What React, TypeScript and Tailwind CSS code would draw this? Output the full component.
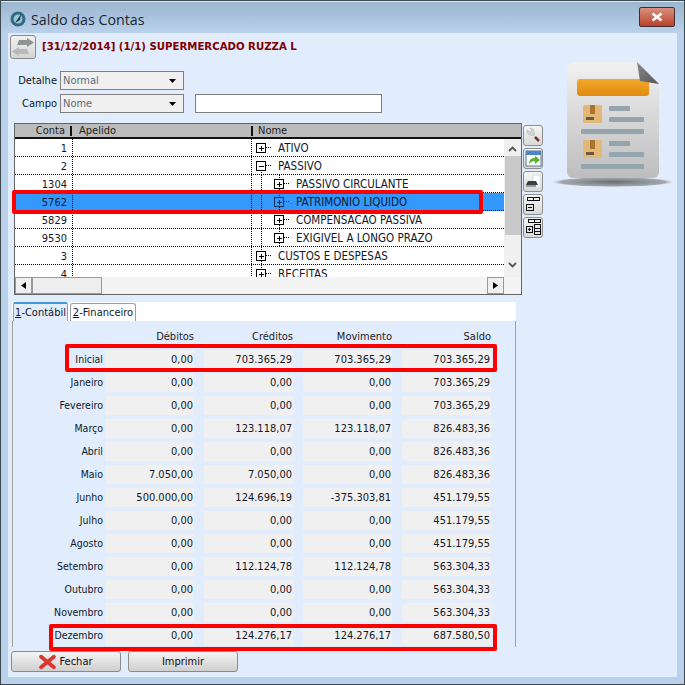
import React from "react";

const F = "font-['DejaVu_Sans_Condensed','DejaVu_Sans','Noto_Sans',sans-serif]";

type Row = { conta: string; nome: string; level: 0 | 1; open?: boolean; sel?: boolean };
const rows: Row[] = [
  { conta: "1", nome: "ATIVO", level: 0 },
  { conta: "2", nome: "PASSIVO", level: 0, open: true },
  { conta: "1304", nome: "PASSIVO CIRCULANTE", level: 1 },
  { conta: "5762", nome: "PATRIMONIO LIQUIDO", level: 1, sel: true },
  { conta: "5829", nome: "COMPENSACAO PASSIVA", level: 1 },
  { conta: "9530", nome: "EXIGIVEL A LONGO PRAZO", level: 1 },
  { conta: "3", nome: "CUSTOS E DESPESAS", level: 0 },
  { conta: "4", nome: "RECEITAS", level: 0 },
];

const data = [
  ["Inicial", "0,00", "703.365,29", "703.365,29", "703.365,29"],
  ["Janeiro", "0,00", "0,00", "0,00", "703.365,29"],
  ["Fevereiro", "0,00", "0,00", "0,00", "703.365,29"],
  ["Março", "0,00", "123.118,07", "123.118,07", "826.483,36"],
  ["Abril", "0,00", "0,00", "0,00", "826.483,36"],
  ["Maio", "7.050,00", "7.050,00", "0,00", "826.483,36"],
  ["Junho", "500.000,00", "124.696,19", "-375.303,81", "451.179,55"],
  ["Julho", "0,00", "0,00", "0,00", "451.179,55"],
  ["Agosto", "0,00", "0,00", "0,00", "451.179,55"],
  ["Setembro", "0,00", "112.124,78", "112.124,78", "563.304,33"],
  ["Outubro", "0,00", "0,00", "0,00", "563.304,33"],
  ["Novembro", "0,00", "0,00", "0,00", "563.304,33"],
  ["Dezembro", "0,00", "124.276,17", "124.276,17", "687.580,50"],
];

function Tree({ row, i }: { row: Row; i: number }) {
  const stroke = row.sel ? "#10305a" : "#000";
  const bx = row.level === 0 ? 4.5 : 22.5;
  const cx = bx + 4;
  return (
    <svg width="42" height="18" className="shrink-0" shapeRendering="crispEdges">
      {i >= 1 && i <= 7 && (
        <line x1="9" y1={i === 1 ? 9 : 0} x2="9" y2="18" stroke="#000" strokeDasharray="1 1" />
      )}
      {row.level === 1 && <line x1="27" y1="0" x2="27" y2="18" stroke="#000" strokeDasharray="1 1" />}
      <line x1={cx + 5} y1="8.5" x2={cx + 11} y2="8.5" stroke={stroke} strokeDasharray="1 1" />
      <rect x={bx} y="4.5" width="9" height="9" fill={row.sel ? "#3399ff" : "#fff"} stroke={stroke} />
      <line x1={bx + 2} y1="9" x2={bx + 7} y2="9" stroke={stroke} />
      {!row.open && <line x1={bx + 4.5} y1="6.5" x2={bx + 4.5} y2="11.5" stroke={stroke} />}
    </svg>
  );
}

function ToolBtn({ children }: { children: React.ReactNode }) {
  return (
    <div className="w-[20px] h-[21px] border border-[#8d8d8d] rounded-[3px] bg-gradient-to-b from-[#f6f6f6] to-[#d9d9d9] flex items-center justify-center">
      {children}
    </div>
  );
}

function Select({ value }: { value: string }) {
  return (
    <div className="w-[124px] h-[19px] border border-[#7f7f7f] bg-[#f0f0f0] flex items-center justify-between pl-[2px] pr-[7px]">
      <span className="text-[#5f6b7a]">{value}</span>
      <svg width="7" height="4"><path d="M0 0h7L3.5 4z" fill="#000" /></svg>
    </div>
  );
}

function DocIcon() {
  return (
    <svg width="125" height="130" viewBox="0 0 125 130">
      <defs>
        <linearGradient id="pg" x1="0" y1="0" x2="0" y2="1">
          <stop offset="0" stopColor="#f1f1f1" />
          <stop offset="1" stopColor="#bdbdbd" />
        </linearGradient>
        <linearGradient id="or" x1="0" y1="0" x2="0" y2="1">
          <stop offset="0" stopColor="#f2a92c" />
          <stop offset="1" stopColor="#e08a10" />
        </linearGradient>
        <linearGradient id="fold" x1="0" y1="0" x2="1" y2="1">
          <stop offset="0" stopColor="#8b8b8b" />
          <stop offset="1" stopColor="#555" />
        </linearGradient>
        <radialGradient id="sh">
          <stop offset="0" stopColor="#555" stopOpacity="0.85" />
          <stop offset="0.85" stopColor="#777" stopOpacity="0.6" />
          <stop offset="1" stopColor="#999" stopOpacity="0" />
        </radialGradient>
      </defs>
      <ellipse cx="63" cy="122" rx="61" ry="5" fill="url(#sh)" />
      <path d="M24 2H87L109 24V112a6 6 0 0 1-6 6H23a6 6 0 0 1-6-6V9a7 7 0 0 1 7-7z" fill="url(#pg)" />
      <rect x="27" y="19" width="72" height="17" rx="3" fill="url(#or)" />
      <path d="M87 2L109 24 90 21z" fill="url(#fold)" />
      {[0, 35].map((d) => (
        <g key={d} transform={`translate(0 ${d})`}>
          <rect x="33" y="45" width="19" height="18" rx="1.5" fill="#e3b778" />
          <rect x="40" y="45" width="5" height="9" fill="#a97632" />
          <rect x="36" y="57" width="8" height="3" fill="#6a5a45" />
          <rect x="59" y="46" width="21" height="5" rx="1" fill="#95a5ad" />
          <rect x="59" y="57" width="35" height="5" rx="1" fill="#95a5ad" />
          <rect x="31" y="69" width="63" height="5" rx="1" fill="#95a5ad" />
        </g>
      ))}
    </svg>
  );
}

function Btn({ children }: { children: React.ReactNode }) {
  return (
    <div className="w-[110px] h-[21px] border border-[#8a8a8a] rounded-[3px] bg-gradient-to-b from-[#f4f4f4] to-[#cfcfcf] flex items-center justify-center gap-[3px] text-[#111]">
      {children}
    </div>
  );
}

export default function App() {
  return (
    <div className={`${F} relative w-[685px] h-[685px] overflow-hidden border border-[#3c4a50] bg-[#b9d1ea] text-[11px] leading-none text-[#10182a]`}>
      {/* title bar */}
      <div className="h-[32px] bg-gradient-to-b from-[#9db6d0] to-[#b9d1ea] flex items-center relative border-t border-[#dfe8f0]">
        <svg width="16" height="16" viewBox="0 0 16 16" className="ml-[9px] mr-[5px] mt-[3px]">
          <circle cx="8" cy="8" r="7.5" fill="#2f6a80" />
          <circle cx="8" cy="8" r="4.5" fill="#9cc4d2" />
          <path d="M5 12L11 3 10 9z" fill="#17404f" />
        </svg>
        <span className="text-[14.25px] mt-[5px] text-[#1c2733] font-['Open_Sans',sans-serif]">Saldo das Contas</span>
        <div className="ml-auto mr-[9px] mb-[2px] w-[36px] h-[20px] rounded-[2px] border border-[#4a2b2f] bg-gradient-to-b from-[#d98f80] to-[#b8402a] flex items-center justify-center">
          <svg width="12" height="10" viewBox="0 0 12 10">
            <path d="M1.5 1.5L10.5 8.5M10.5 1.5L1.5 8.5" stroke="#fff" strokeWidth="2.6" />
          </svg>
        </div>
      </div>

      {/* client */}
      <div className="mx-[7px] h-[644px] bg-[#e1edfd] flex flex-col">
        <div className="flex">
          <div className="w-[535px] shrink-0">
            <div className="flex items-center pt-[2px] pl-[2px]">
              <div className="w-[26px] h-[24px] border border-[#8a8a8a] rounded-[3px] bg-gradient-to-b from-[#f2f2f2] to-[#d5d5d5] flex items-center justify-center">
                <svg width="24" height="18" viewBox="0 0 24 18">
                  <path d="M8 2h8V0l7 4.5L16 9V7H6z" fill="#8e9690" />
                  <path d="M16 11H8V9l-7 4.5L8 18v-2h10z" fill="#b5bab6" />
                </svg>
              </div>
              <span className="ml-[6px] font-bold text-[#800000] text-[11.3px]">[31/12/2014] (1/1) SUPERMERCADO RUZZA L</span>
            </div>
            <div className="flex items-center mt-[12px]">
              <span className="w-[49px] text-right mr-[3px]">Detalhe</span>
              <Select value="Normal" />
            </div>
            <div className="flex items-center mt-[4px]">
              <span className="w-[49px] text-right mr-[3px]">Campo</span>
              <Select value="Nome" />
              <div className="ml-[11px] w-[187px] h-[19px] border border-[#7f7f7f] bg-white" />
            </div>

            <div className="flex mt-[10px] ml-[6px]">
              {/* list */}
              <div className="w-[508px] h-[172px] border border-[#666] bg-white flex flex-col">
                <div className="h-[15px] shrink-0 bg-[#bcbcbc] border-b-[2px] border-[#111] flex items-center relative">
                  <span className="w-[50px] text-right text-[#222]">Conta</span>
                  <span className="ml-[5px] w-[2px] h-[10px] bg-[#111]" />
                  <span className="ml-[7px] w-[172px] text-[#222]">Apelido</span>
                  <span className="w-[2px] h-[10px] bg-[#111]" />
                  <span className="ml-[5px] text-[#222]">Nome</span>
                </div>
                <div className="flex h-[138px] shrink-0">
                  <div className="w-[489px] h-[138px] overflow-hidden">
                    {rows.map((r, i) => (
                      <div key={r.conta} className={`h-[18px] flex items-center border-b border-dotted border-black ${r.sel ? "bg-[#3399ff]" : ""}`}>
                        <span className="w-[52px] text-right pt-[2px]">{r.conta}</span>
                        <div className="ml-[5px] h-full w-[180px] border-l border-r border-dotted border-black" />
                        <Tree row={r} i={i} />
                        <span className={`pt-[2px] text-[11.5px] ${r.level === 0 ? "-ml-[16px]" : "ml-[2px]"}`}>{r.nome}</span>
                      </div>
                    ))}
                  </div>
                  <div className="w-[17px] h-[138px] bg-[#f0f0f0] flex flex-col items-center">
                    <svg width="9" height="6" viewBox="0 0 9 6" className="mt-[7px]"><path d="M1 5l3.5-3.5L8 5" fill="none" stroke="#555" strokeWidth="1.8" /></svg>
                    <div className="mt-[4px] w-[16px] h-[79px] bg-[#c9c9c9]" />
                    <svg width="9" height="6" viewBox="0 0 9 6" className="mt-[27px]"><path d="M1 1l3.5 3.5L8 1" fill="none" stroke="#555" strokeWidth="1.8" /></svg>
                  </div>
                </div>
                <div className="flex-1 bg-[#f4f4f4] flex">
                  <div className="w-[17px] h-full border border-[#999] bg-[#f0f0f0] flex items-center justify-center">
                    <svg width="5" height="7"><path d="M5 0v7L0 3.5z" fill="#000" /></svg>
                  </div>
                  <div className="w-[70px] h-full border border-[#999] bg-[#eeeeee]" />
                  <div className="flex-1" />
                  <div className="w-[17px] h-full border border-[#999] bg-[#f0f0f0] flex items-center justify-center mr-[17px]">
                    <svg width="5" height="7"><path d="M0 0v7L5 3.5z" fill="#000" /></svg>
                  </div>
                </div>
              </div>
              {/* tools */}
              <div className="ml-[1px] mt-[2px] flex flex-col gap-[2px]">
                <ToolBtn>
                  <svg width="17" height="17" viewBox="0 0 17 17"><path d="M2 3a4 4 0 0 0 5 5l1 1 2-2-1-1a4 4 0 0 0-4-5l2 3-2 1z" fill="#d4d4d4" stroke="#aaa" strokeWidth=".5" /><path d="M10 10l4 4" stroke="#7a3030" strokeWidth="2.5" /></svg>
                </ToolBtn>
                <ToolBtn>
                  <svg width="17" height="17" viewBox="0 0 17 17"><rect x="1" y="1" width="15" height="15" fill="#fff" stroke="#5a7590" /><rect x="1" y="1" width="15" height="4" fill="#4c86c6" /><path d="M4 14c0-4 2-6 6-6V5.5L15 10l-5 4v-3c-3 0-4 1-6 3z" fill="#55b52f" /></svg>
                </ToolBtn>
                <ToolBtn>
                  <svg width="17" height="17" viewBox="0 0 17 17"><rect x="8" y="2" width="7" height="12" fill="#fff" stroke="#ddd" /><path d="M3 8h8l2 4H1z" fill="#3a3f44" /><rect x="1" y="12" width="10" height="2" fill="#9a9a9a" /></svg>
                </ToolBtn>
                <ToolBtn>
                  <svg width="17" height="17" viewBox="0 0 17 17" fill="none" stroke="#111" shapeRendering="crispEdges"><rect x="2.5" y="1.5" width="6" height="3" /><rect x="8.5" y="1.5" width="6" height="3" /><rect x="1.5" y="8.5" width="7" height="6" /><path d="M3 11.5h4" /></svg>
                </ToolBtn>
                <ToolBtn>
                  <svg width="17" height="17" viewBox="0 0 17 17" fill="none" stroke="#111" shapeRendering="crispEdges"><rect x="3.5" y="0.5" width="12" height="3" /><path d="M9.5 0.5v3" /><rect x="9.5" y="5.5" width="6" height="10" /><path d="M9.5 9h6M9.5 12.5h6" /><rect x="1.5" y="7.5" width="6" height="6" /><path d="M3 10.5h3M4.5 9v3" /></svg>
                </ToolBtn>
              </div>
            </div>
          </div>
          <div className="mt-[27px] pl-[7px]">
            <DocIcon />
          </div>
        </div>

        {/* tabs */}
        <div className="mt-[7px] ml-[4px] w-[504px] h-[345px] flex flex-col">
          <div className="h-[19px] bg-white flex items-end shrink-0">
            <div className="ml-[1px] w-[55px] h-[19px] bg-[#e1edfd] border-t-[2px] border-x border-[#3f9ae0] border-x-[#a0a0a0] rounded-t-[2px] flex items-center justify-center">
              <span><span className="underline">1</span>-Contábil</span>
            </div>
            <div className="ml-[2px] w-[66px] h-[18px] bg-white border-t border-x border-[#a0a0a0] rounded-t-[3px] flex items-center justify-center">
              <span><span className="underline">2</span>-Financeiro</span>
            </div>
          </div>
          <div className="flex-1 border-x border-[#a0a0a0] pt-[6px] pl-[3px]">
            <div className="grid grid-cols-[79px_89px_89px_89px_89px] gap-x-[10px] gap-y-[4px] auto-rows-[19px]">
              <span />
              {["Débitos", "Créditos", "Movimento", "Saldo"].map((h) => (
                <span key={h} className="flex items-center justify-end text-[#222]">{h}</span>
              ))}
              {data.map((d) => (
                <React.Fragment key={d[0]}>
                  <span className="flex items-center justify-end -mr-[8px] text-[10.5px]">{d[0]}</span>
                  {d.slice(1).map((v, i) => (
                    <span key={i} className="flex items-center justify-end bg-[#f0f0f0] pr-[1px]">{v}</span>
                  ))}
                </React.Fragment>
              ))}
            </div>
          </div>
        </div>

        {/* buttons */}
        <div className="mt-[4px] ml-[3px] flex gap-[7px]">
          <Btn>
            <svg width="17" height="16" viewBox="0 0 16 15">
              <path d="M2 2.5L14 12.5M14 2.5L2 12.5" stroke="#d83a30" strokeWidth="3.6" strokeLinecap="round" />
            </svg>
            Fechar
          </Btn>
          <Btn>Imprimir</Btn>
        </div>
      </div>

      {/* red highlights */}
      <div className="absolute left-[11px] top-[189px] w-[471px] h-[24px] border-[4px] border-[#ff0000] rounded-[2px]" />
      <div className="absolute left-[64px] top-[343px] w-[432px] h-[28px] border-[4px] border-[#ff0000] rounded-[2px]" />
      <div className="absolute left-[48px] top-[623px] w-[448px] h-[27px] border-[4px] border-[#ff0000] rounded-[2px]" />
    </div>
  );
}
